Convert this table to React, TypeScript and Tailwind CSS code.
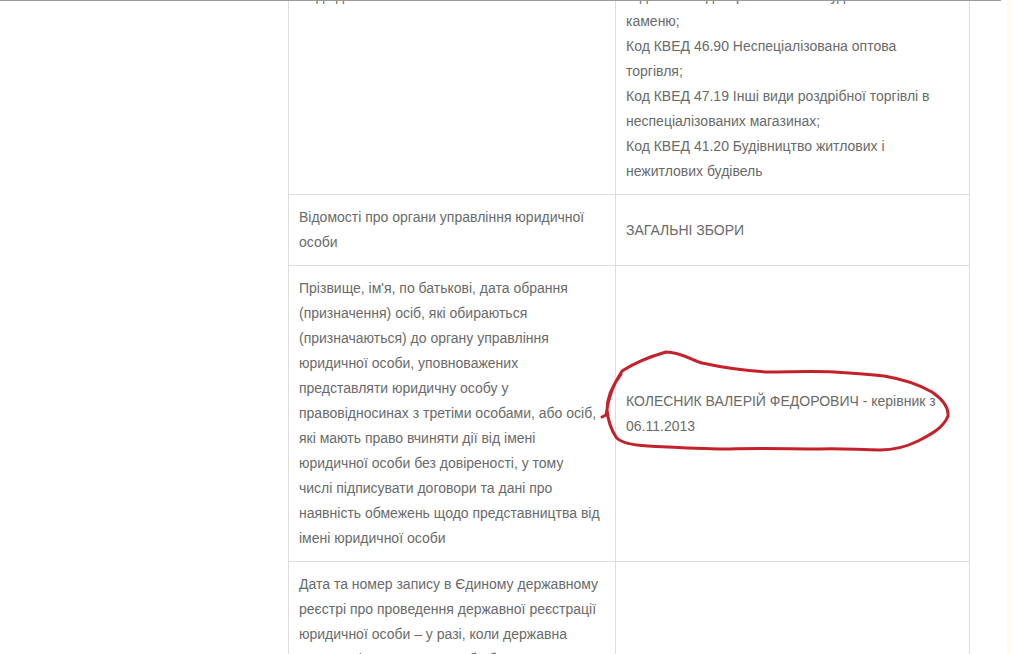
const row1Right = [
  "Код КВЕД 46.73 Оптова торгівля деревиною,",
  "будівельними матеріалами та санітарно-",
  "технічним обладнанням;",
  "Код КВЕД 47.52 Роздрібна торгівля залізними",
  "виробами, будівельними матеріалами та",
  "склом у спеціалізованих магазинах;",
  "Код КВЕД 23.70 Різання, оброблення та",
  "оздоблення декоративного та будівельного",
  "каменю;",
  "Код КВЕД 46.90 Неспеціалізована оптова",
  "торгівля;",
  "Код КВЕД 47.19 Інші види роздрібної торгівлі в",
  "неспеціалізованих магазинах;",
  "Код КВЕД 41.20 Будівництво житлових і",
  "нежитлових будівель",
];

const row3Left = [
  "Прізвище, ім'я, по батькові, дата обрання",
  "(призначення) осіб, які обираються",
  "(призначаються) до органу управління",
  "юридичної особи, уповноважених",
  "представляти юридичну особу у",
  "правовідносинах з третіми особами, або осіб,",
  "які мають право вчиняти дії від імені",
  "юридичної особи без довіреності, у тому",
  "числі підписувати договори та дані про",
  "наявність обмежень щодо представництва від",
  "імені юридичної особи",
];

const row4Left = [
  "Дата та номер запису в Єдиному державному",
  "реєстрі про проведення державної реєстрації",
  "юридичної особи – у разі, коли державна",
  "реєстрація юридичної особи була проведена",
];

function Lines({ lines }: { lines: string[] }) {
  return (
    <>
      {lines.map((l, i) => (
        <div key={i} className="whitespace-nowrap">
          {l}
        </div>
      ))}
    </>
  );
}

function Row({ left, right }: { left: string[]; right: string[] }) {
  return (
    <div className="grid grid-cols-[327px_355px] border-b border-[#dddddd]">
      <div className="flex flex-col justify-center border-l border-[#dddddd] px-[10px] py-[10px]">
        <Lines lines={left} />
      </div>
      <div className="flex flex-col justify-center border-x border-[#dddddd] px-[10px] py-[10px]">
        <Lines lines={right} />
      </div>
    </div>
  );
}

export default function App() {
  return (
    <div
      className="relative flex h-[654px] w-[1011px] overflow-hidden bg-white text-[14px] leading-[25px] text-[#6a6a6a]"
      style={{ fontFamily: '"Liberation Sans", Arial, sans-serif' }}
    >
      <div className="w-[1007px] shrink-0">
        <div className="ml-[288px] mt-[-201px] w-[682px]">
          <Row left={["Види діяльності"]} right={row1Right} />
          <Row
            left={["Відомості про органи управління юридичної", "особи"]}
            right={["ЗАГАЛЬНІ ЗБОРИ"]}
          />
          <Row
            left={row3Left}
            right={["КОЛЕСНИК ВАЛЕРІЙ ФЕДОРОВИЧ - керівник з", "06.11.2013"]}
          />
          <Row left={row4Left} right={[""]} />
        </div>
      </div>
      <div className="flex-1 bg-[#fffcea]" />

      <div className="absolute left-0 top-0 h-px w-[1001px] bg-[#9a9a9a]" />

      {/* hand-drawn red loop around the manager's name */}
      <svg
        className="pointer-events-none absolute left-0 top-0"
        width="1011"
        height="654"
        viewBox="0 0 1011 654"
      >
        <path
          d="M602 417 L606 415 C608 400 613 384 622 371 C636 362 652 356 666 352 C680 352 692 360 702 363 C725 368 748 371 768 372 C790 372 812 371 834 372 C852 373 868 374 884 376 C902 379 918 384 932 392 C942 399 949 407 948 416 C944 427 932 434 918 441 C906 447 893 450 880 450 C860 450 840 448 820 449 C790 449 760 448 730 449 C700 449 672 447 648 446 C632 445 620 443 616 437 C610 428 608 420 607 410 C607 398 612 386 621 374"
          fill="none"
          stroke="#c4212b"
          strokeWidth="3"
          strokeLinecap="round"
          strokeLinejoin="round"
        />
      </svg>
    </div>
  );
}
